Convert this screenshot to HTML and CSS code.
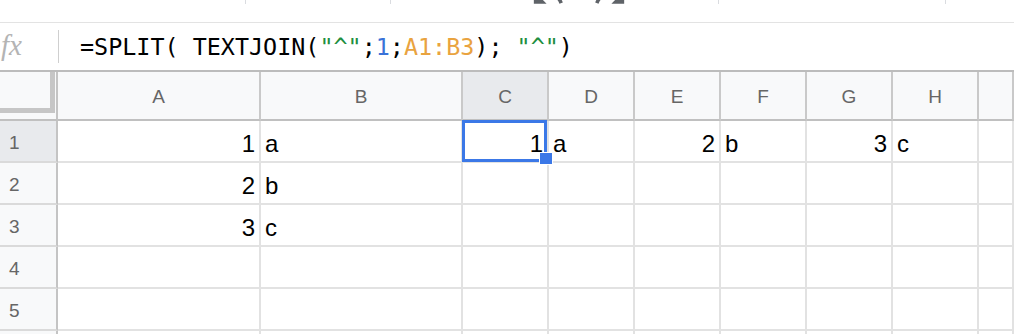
FILE: index.html
```html
<!DOCTYPE html>
<html lang="en">
<head>
    <meta charset="UTF-8">
    <title>Sheet - SPLIT / TEXTJOIN</title>
    <link rel="stylesheet" href="styles.css">
</head>
<body>
    <div class="toolbar">
        <span class="tb__sep" style="margin-left: 245px"></span>
        <span class="tb__sep" style="margin-left: 144px"></span>
        <svg class="tb__icon" style="margin-left: 140px" width="34" height="34" viewBox="0 0 24 24"><path d="M12.5 8c-2.65 0-5.05.99-6.9 2.6L2 7v9h9l-3.62-3.62c1.39-1.16 3.16-1.88 5.12-1.88 3.54 0 6.55 2.31 7.6 5.5l2.37-.78C21.08 11.03 17.15 8 12.5 8z"/></svg>
        <svg class="tb__icon" style="margin-left: 28px" width="34" height="34" viewBox="0 0 24 24"><path d="M18.4 10.6C16.55 8.99 14.15 8 11.5 8c-4.650 0-8.58 3.03-9.96 7.22L3.9 16c1.05-3.19 4.05-5.5 7.6-5.5 1.95 0 3.73.72 5.12 1.88L13 16h9V7l-3.6 3.6z"/></svg>
        <span class="tb__sep" style="margin-left: 91px"></span>
        <span class="tb__sep" style="margin-left: 226px"></span>
    </div>

    <div class="formula__bar">
        <div class="formula__fx">fx</div>
        <div class="formula__text">=SPLIT( TEXTJOIN(<span class="f__str">"^"</span>;<span class="f__num">1</span>;<span class="f__ref">A1:B3</span>); <span class="f__str">"^"</span>)</div>
    </div>

    <div class="sheet">
        <div class="corner"><div class="corner__freeze"></div></div>
        <div class="col__head">A</div>
        <div class="col__head">B</div>
        <div class="col__head col__head--active">C</div>
        <div class="col__head">D</div>
        <div class="col__head">E</div>
        <div class="col__head">F</div>
        <div class="col__head">G</div>
        <div class="col__head">H</div>
        <div class="col__head"></div>

        <div class="row__head row__head--active">1</div>
        <div class="cell cell--num">1</div>
        <div class="cell">a</div>
        <div class="cell cell--num cell--selected">1</div>
        <div class="cell">a</div>
        <div class="cell cell--num">2</div>
        <div class="cell">b</div>
        <div class="cell cell--num">3</div>
        <div class="cell">c</div>
        <div class="cell"></div>

        <div class="row__head">2</div>
        <div class="cell cell--num">2</div>
        <div class="cell">b</div>
        <div class="cell"></div><div class="cell"></div><div class="cell"></div><div class="cell"></div><div class="cell"></div><div class="cell"></div><div class="cell"></div>

        <div class="row__head">3</div>
        <div class="cell cell--num">3</div>
        <div class="cell">c</div>
        <div class="cell"></div><div class="cell"></div><div class="cell"></div><div class="cell"></div><div class="cell"></div><div class="cell"></div><div class="cell"></div>

        <div class="row__head">4</div>
        <div class="cell"></div><div class="cell"></div><div class="cell"></div><div class="cell"></div><div class="cell"></div><div class="cell"></div><div class="cell"></div><div class="cell"></div><div class="cell"></div>

        <div class="row__head">5</div>
        <div class="cell"></div><div class="cell"></div><div class="cell"></div><div class="cell"></div><div class="cell"></div><div class="cell"></div><div class="cell"></div><div class="cell"></div><div class="cell"></div>

        <div class="row__head"></div>
        <div class="cell"></div><div class="cell"></div><div class="cell"></div><div class="cell"></div><div class="cell"></div><div class="cell"></div><div class="cell"></div><div class="cell"></div><div class="cell"></div>
    </div>
</body>
</html>
```

FILE: styles.css
```css
*{
    box-sizing: border-box;
    padding: 0;margin: 0;
}
body{
    background: #fff;
    width: 1014px;
    height: 334px;
    overflow: hidden;
    font-family: "Liberation Sans", Arial, sans-serif;
}

/* toolbar, only its bottom edge is visible */
.toolbar{
    display: flex;
    align-items: flex-start;
    height: 22px;
    overflow: hidden;
}
.tb__sep{
    width: 1px;
    height: 4px;
    background: #dadce0;
}
.tb__icon{
    flex: none;
    margin-top: -19px;
    fill: #5f6368;
}

/* formula bar */
.formula__bar{
    display: flex;
    align-items: center;
    height: 50px;
    border-top: 1px solid #e3e3e3;
    border-bottom: 2px solid #bcbcbc;
}
.formula__fx{
    width: 59px;
    height: 33px;
    border-right: 1px solid #cfcfcf;
    padding-left: 1px;
    font-family: "Liberation Serif", serif;
    font-style: italic;
    font-size: 29px;
    line-height: 30px;
    color: #b4b4b4;
}
.formula__text{
    padding-left: 21px;
    padding-top: 1px;
    font-family: "DejaVu Sans Mono", monospace;
    font-size: 23.4px;
    color: #000;
    white-space: pre;
}
.f__str{ color: #1e8e3e; }
.f__num{ color: #3a72d8; }
.f__ref{ color: #e9a33f; }

/* grid */
.sheet{
    display: grid;
    grid-template-columns: 58px 203px 202px repeat(6, 86px) 1fr;
    grid-template-rows: 49px repeat(6, 42px);
}
.corner{
    background: #f8f9fa;
    border-right: 2px solid #c4c4c4;
    border-bottom: 2px solid #c0c0c0;
}
.corner__freeze{
    width: 55px;
    height: 41px;
    border-right: 5px solid #c6c6c6;
    border-bottom: 5px solid #c6c6c6;
}
.col__head{
    display: flex;
    align-items: center;
    justify-content: center;
    padding-top: 3px;
    background: #f8f9fa;
    border-right: 2px solid #c9c9c9;
    border-bottom: 2px solid #c0c0c0;
    font-size: 19px;
    color: #666;
}
.col__head--active{
    background: #e8eaed;
}
.row__head{
    display: flex;
    align-items: center;
    padding: 3px 0 0 9px;
    background: #f8f9fa;
    border-right: 2px solid #c4c4c4;
    border-bottom: 2px solid #dadada;
    font-size: 19px;
    color: #666;
}
.row__head--active{
    background: #e8eaed;
}
.cell{
    display: flex;
    align-items: center;
    padding: 5px 4px 0;
    border-right: 2px solid #e2e2e2;
    border-bottom: 2px solid #e2e2e2;
    font-size: 24px;
    color: #000;
    white-space: nowrap;
}
.cell--num{
    justify-content: flex-end;
}
.cell--selected{
    position: relative;
}
.cell--selected::before{
    content: "";
    position: absolute;
    top: -1px; left: -1px; right: 0; bottom: -1px;
    border: 3px solid #3b78e7;
}
.cell--selected::after{
    content: "";
    position: absolute;
    right: -6px;
    bottom: -4px;
    width: 12px;
    height: 11px;
    background: #3b78e7;
    border: 1px solid #fff;
}
```
